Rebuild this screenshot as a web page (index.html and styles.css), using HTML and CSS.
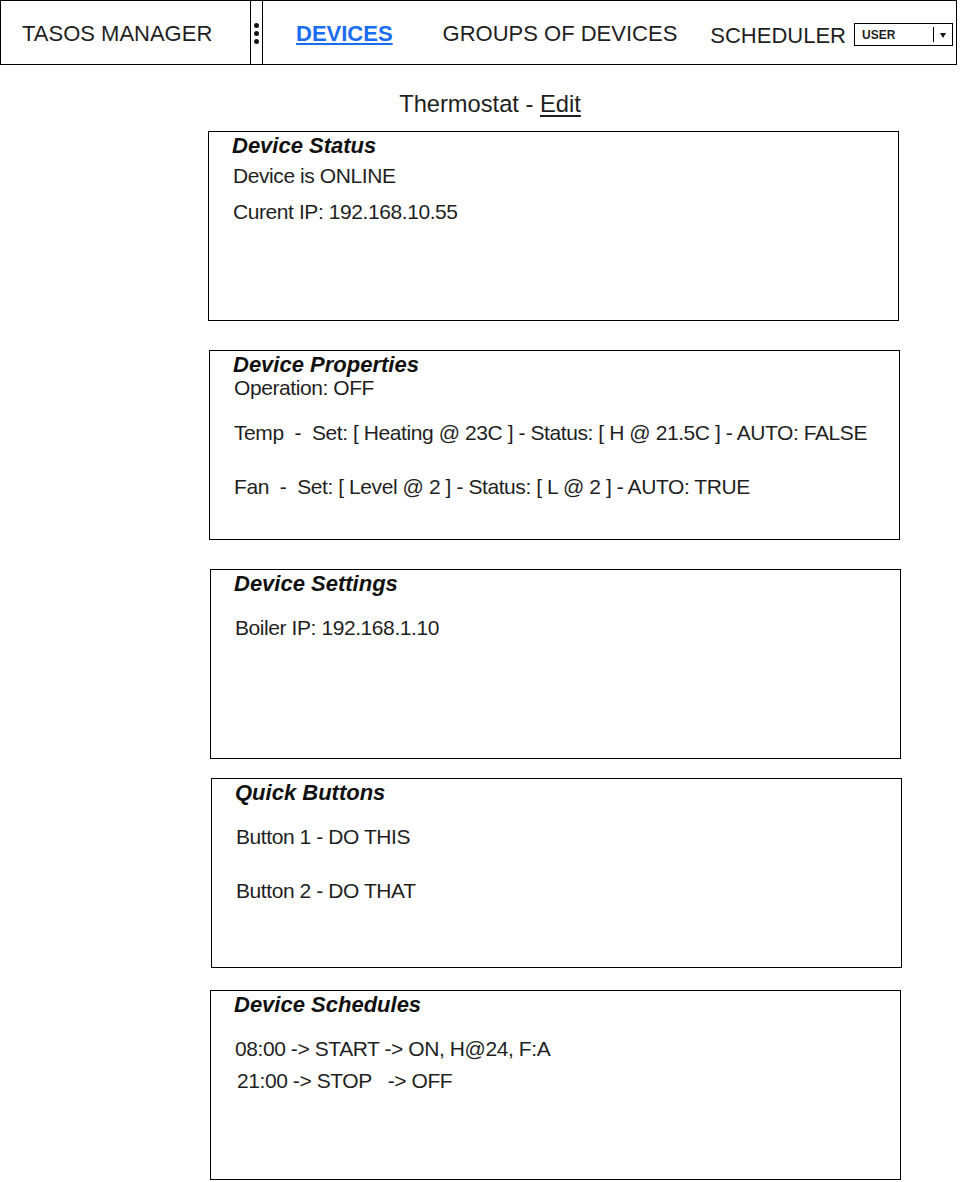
FILE: index.html
```html
<!DOCTYPE html>
<html lang="en">
<head>
<meta charset="utf-8">
<title>Thermostat - Edit</title>
<link rel="stylesheet" href="styles.css">
</head>
<body>
<header class="topbar">
  <div class="brand">TASOS MANAGER</div>
  <div class="handle"><span></span><span></span><span></span></div>
  <nav class="nav">
    <a class="nav-link nav-link--active" href="#">DEVICES</a>
    <a class="nav-link nav-link--groups" href="#">GROUPS OF DEVICES</a>
    <a class="nav-link nav-link--scheduler" href="#">SCHEDULER</a>
    <div class="user-select">
      <span class="user-label">USER</span>
      <span class="user-sep"></span>
      <span class="user-arrow"></span>
    </div>
  </nav>
</header>

<h1 class="page-title">Thermostat - <span class="page-title__link">Edit</span></h1>

<main class="panels">
  <section class="panel panel--status">
    <h2 class="panel-title">Device Status</h2>
    <p class="line line--close">Device is ONLINE</p>
    <p class="line line--near">Curent IP: 192.168.10.55</p>
  </section>

  <section class="panel panel--props">
    <h2 class="panel-title">Device Properties</h2>
    <p class="line line--flush">Operation: OFF</p>
    <p class="line line--spaced">Temp  -  Set: [ Heating @ 23C ] - Status: [ H @ 21.5C ] - AUTO: FALSE</p>
    <p class="line line--wide">Fan  -  Set: [ Level @ 2 ] - Status: [ L @ 2 ] - AUTO: TRUE</p>
  </section>

  <section class="panel panel--settings">
    <h2 class="panel-title">Device Settings</h2>
    <p class="line line--spaced">Boiler IP: 192.168.1.10</p>
  </section>

  <section class="panel panel--quick">
    <h2 class="panel-title">Quick Buttons</h2>
    <p class="line line--spaced">Button 1 - DO THIS</p>
    <p class="line line--wide">Button 2 - DO THAT</p>
  </section>

  <section class="panel panel--schedules">
    <h2 class="panel-title">Device Schedules</h2>
    <p class="line line--spaced">08:00 -&gt; START -&gt; ON, H@24, F:A</p>
    <p class="line line--close line--indent">21:00 -&gt; STOP   -&gt; OFF</p>
  </section>
</main>
</body>
</html>
```

FILE: styles.css
```css
* {
  box-sizing: border-box;
}

body {
  margin: 0;
  background: #fff;
  color: #1f1f1f;
  font-family: "Liberation Sans", Arial, sans-serif;
}

/* ---------- top bar ---------- */
.topbar {
  display: flex;
  width: 957px;
  height: 65px;
  border: 1px solid #000;
}

.brand {
  display: flex;
  align-items: center;
  width: 250px;
  padding: 2px 0 0 21px;
  border-right: 1px solid #000;
  font-size: 22px;
  color: #1f1f1f;
}

.handle {
  display: flex;
  flex-direction: column;
  align-items: center;
  justify-content: center;
  gap: 3px;
  width: 12px;
  padding-top: 2px;
  border-right: 1px solid #000;
}

.handle span {
  width: 5px;
  height: 5px;
  border-radius: 50%;
  background: #111;
}

.nav {
  display: flex;
  align-items: center;
  flex: 1;
  padding: 2px 0 0 33px;
}

.nav-link {
  font-size: 22px;
  color: #1f1f1f;
  text-decoration: none;
  white-space: nowrap;
}

.nav-link--active {
  font-weight: bold;
  color: #1a6cf0;
  text-decoration: underline;
  text-underline-offset: 2px;
}

.nav-link--groups {
  margin-left: 50px;
}

.nav-link--scheduler {
  margin-left: 33px;
  margin-top: 4px;
}

.user-select {
  display: flex;
  align-items: center;
  width: 99px;
  height: 23px;
  margin: 2px 0 0 8px;
  padding-left: 7px;
  border: 1px solid #000;
}

.user-label {
  flex: 1;
  font-size: 12px;
  font-weight: bold;
  color: #1f1f1f;
}

.user-sep {
  width: 1px;
  height: 15px;
  background: #000;
}

.user-arrow {
  width: 0;
  height: 0;
  margin: 1px 6px 0;
  border-top: 5px solid #111;
  border-left: 3.5px solid transparent;
  border-right: 3.5px solid transparent;
}

/* ---------- page title ---------- */
.page-title {
  margin: 25px 0 0;
  padding-left: 20px;
  font-size: 23.7px;
  font-weight: normal;
  line-height: 28px;
  text-align: center;
  color: #1f1f1f;
}

.page-title__link {
  text-decoration: underline;
  text-underline-offset: 3px;
}

/* ---------- panels ---------- */
.panels {
  display: flex;
  flex-direction: column;
  align-items: flex-start;
  margin-top: 13px;
  padding-left: 208px;
}

.panel {
  width: 691px;
  height: 190px;
  padding: 3px 0 0 23px;
  border: 1px solid #000;
}

.panel--props {
  margin: 29px 0 0 1px;
}

.panel--settings {
  margin: 29px 0 0 2px;
}

.panel--quick {
  margin: 19px 0 0 3px;
}

.panel--schedules {
  margin: 22px 0 0 2px;
}

.panel-title {
  margin: 0;
  font-size: 22px;
  font-weight: bold;
  font-style: italic;
  line-height: 22px;
  color: #111;
}

.line {
  margin: 0 0 0 1px;
  font-size: 21px;
  letter-spacing: -0.42px;
  line-height: 24px;
  white-space: pre;
  color: #1f1f1f;
}

.line--flush {
  margin-top: 0;
}

.line--close {
  margin-top: 8px;
}

.line--near {
  margin-top: 12px;
}

.line--spaced {
  margin-top: 21px;
}

.line--wide {
  margin-top: 30px;
}

.line--indent {
  margin-left: 3px;
}

.panel--status .line--close {
  margin-top: 7px;
}
```
